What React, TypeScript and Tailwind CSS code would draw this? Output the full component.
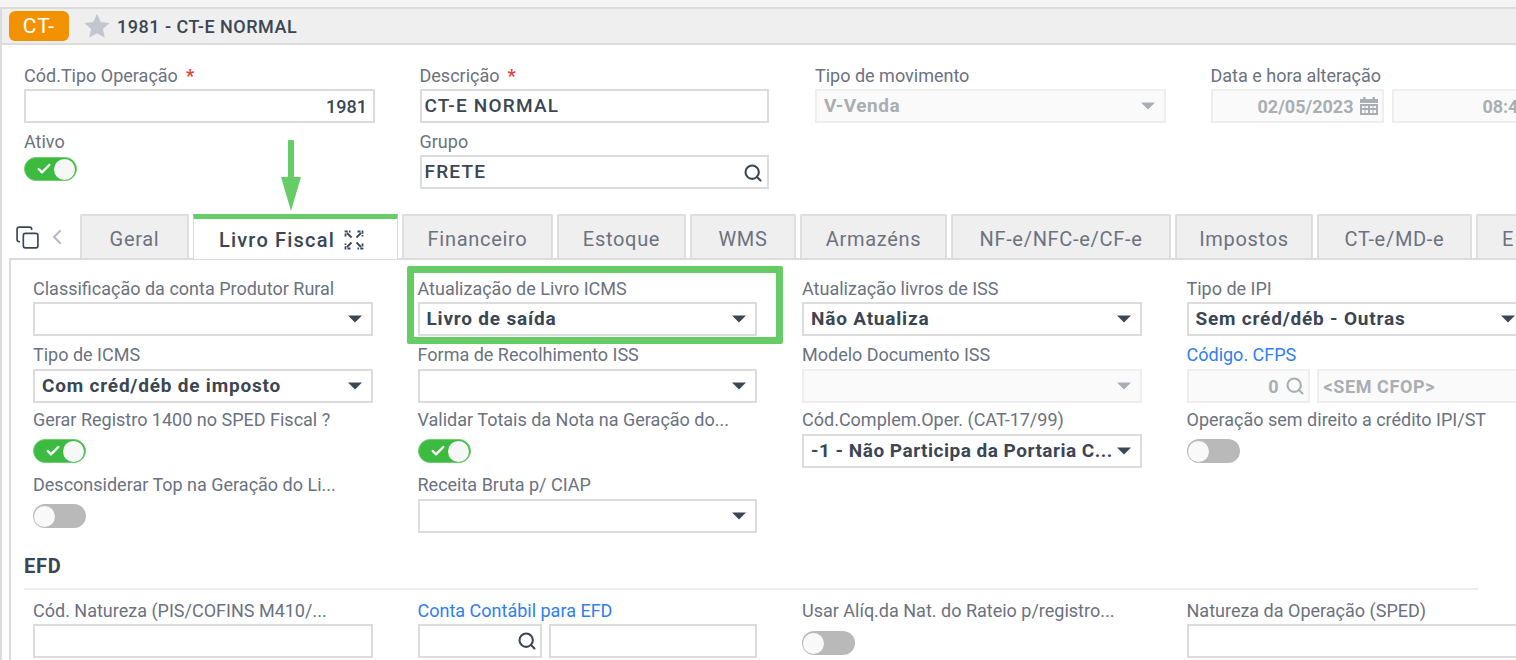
import { Copy, ChevronLeft, Search, Check } from 'lucide-react';

const TABS = [
  { name: 'Geral', w: 'w-[109px]' },
  { name: 'Livro Fiscal', w: 'w-[205px]', active: true },
  { name: 'Financeiro', w: 'w-[151px]' },
  { name: 'Estoque', w: 'w-[129px]' },
  { name: 'WMS', w: 'w-[106px]' },
  { name: 'Armazéns', w: 'w-[147px]' },
  { name: 'NF-e/NFC-e/CF-e', w: 'w-[220px]' },
  { name: 'Impostos', w: 'w-[138px]' },
  { name: 'CT-e/MD-e', w: 'w-[155px]' },
  { name: 'E', w: 'w-[64px]' },
];

function Caret({ muted }: { muted?: boolean }) {
  return (
    <svg className="w-[14px] h-[8px] shrink-0" viewBox="0 0 14 8">
      <path d="M0 0.5h14L7 7.5z" fill={muted ? '#a9aeb4' : '#3a4654'} />
    </svg>
  );
}

function Toggle({ on }: { on?: boolean }) {
  if (on) {
    return (
      <div className="w-[53px] h-[24px] rounded-full bg-[#3dbb41] border border-[#6fce72] flex items-center justify-between pl-[11px] pr-[1px]">
        <Check size={16} strokeWidth={3.5} className="text-white" />
        <div className="w-[21px] h-[21px] rounded-full bg-[#f7f7f7]" />
      </div>
    );
  }
  return (
    <div className="w-[53px] h-[24px] rounded-full bg-[#b9b9b9] flex items-center pl-[1px]">
      <div className="w-[21px] h-[21px] rounded-full bg-[#f9f9f9]" />
    </div>
  );
}

function Label({ text, first, link, req }: { text: string; first?: boolean; link?: boolean; req?: boolean }) {
  return (
    <div
      className={`h-5 leading-[21px] text-[18px] whitespace-nowrap ${first ? 'mb-1' : 'mb-[5px]'} ${
        link ? 'text-[#2f80ed]' : 'text-[#6b7280]'
      }`}
    >
      {text}
      {req && <span className="ml-[8px] text-[#e0443e] font-bold">*</span>}
    </div>
  );
}

function Select({ value, disabled, tight }: { value?: string; disabled?: boolean; tight?: boolean }) {
  return (
    <div
      className={`h-[34px] border-2 flex items-center justify-between pl-[7px] pr-[9px] ${
        disabled ? 'border-[#eeeeee] bg-[#fafafa]' : 'border-[#dcdcdc] bg-white'
      }`}
    >
      <span
        className={`whitespace-nowrap pt-[1px] font-bold text-[19px] ${tight ? 'tracking-[0.5px]' : 'tracking-[0.8px]'} ${
          disabled ? 'text-[#a9aeb4]' : 'text-[#3a4654]'
        }`}
      >
        {value}
      </span>
      <Caret muted={disabled} />
    </div>
  );
}

function Input({ className = '', children }: { className?: string; children?: React.ReactNode }) {
  return (
    <div className={`h-[34px] border-2 border-[#dcdcdc] bg-white flex items-center text-[#3a4654] ${className}`}>
      {children}
    </div>
  );
}

function DisabledInput({ className = '', children }: { className?: string; children?: React.ReactNode }) {
  return (
    <div className={`h-[34px] border-2 border-[#eeeeee] bg-[#fafafa] flex items-center text-[18px] font-bold text-[#a9aeb4] ${className}`}>
      {children}
    </div>
  );
}

function CalendarIcon() {
  return (
    <svg className="w-[20px] h-[20px] shrink-0" viewBox="0 0 20 20" fill="#a9aeb4">
      <rect x="4" y="1" width="2.5" height="4" />
      <rect x="13.5" y="1" width="2.5" height="4" />
      <rect x="1" y="3" width="18" height="4" />
      <path d="M1 8h18v11H1zM3 10v2h2.500v-2zM6.500 10v2h2.500v-2zM11 10v2h2.500v-2zM14.500 10v2H17v-2zM3 14v3h2.500v-3zM6.500 14v3h2.500v-3zM11 14v3h2.500v-3zM14.500 14v3H17v-3z" fillRule="evenodd" />
    </svg>
  );
}

function ExpandIcon() {
  return (
    <svg className="w-[20px] h-[20px] shrink-0" viewBox="0 0 20 20" fill="none" stroke="#3a4654" strokeWidth="1.8">
      <path d="M1.500 6.500V1.500h5M13.500 1.500h5v5M18.500 13.500v5h-5M6.500 18.500h-5v-5" strokeDasharray="3 1.200" />
      <path d="M3 3l4.500 4.500M17 3l-4.500 4.500M17 17l-4.500-4.500M3 17l4.500-4.500" />
    </svg>
  );
}

export default function App() {
  return (
    <div className="relative w-[1516px] h-[660px] overflow-hidden bg-white font-[Roboto,sans-serif]">
      <div className="h-[7px] bg-[#f4f4f4]" />
      <div className="border-l-2 border-[#dcdcdc] h-[653px] ml-0">
        {/* Header */}
        <div className="h-[38px] bg-[#efefef] border-y-2 border-[#dcdcdc] flex items-center pl-[7px]">
          <div className="w-[60px] h-[30px] rounded-md bg-[#f39200] text-white text-[21px] tracking-[1px] pt-[1px] flex items-center justify-center">
            CT-
          </div>
          <svg className="w-[26px] h-[26px] ml-[15px]" viewBox="0 0 24 24" fill="#c3c7cd">
            <path d="M12 0.800l3.400 7.600 8.200 0.900-6.100 5.500 1.700 8.100L12 18.800l-7.200 4.100 1.700-8.100L0.400 9.300l8.200-0.900z" />
          </svg>
          <span className="ml-[7px] text-[18px] font-medium tracking-[0.5px] text-[#3a4654]">1981 - CT-E NORMAL</span>
        </div>

        {/* Form */}
        <div className="pl-[22px] pt-[20px] h-[169px]">
          <div className="grid grid-cols-[repeat(4,351px)] gap-x-[44.5px] grid-rows-[66px_66px]">
            <div>
              <Label first req text="Cód.Tipo Operação" />
              <Input className="justify-end pr-[6px] font-medium text-[18px]">1981</Input>
            </div>
            <div>
              <Label first req text="Descrição" />
              <Input className="pl-[3px] pt-[1px] font-medium text-[19px] tracking-[1.2px] w-[349px]">CT-E NORMAL</Input>
            </div>
            <div>
              <Label first text="Tipo de movimento" />
              <Select disabled value="V-Venda" tight />
            </div>
            <div>
              <Label first text="Data e hora alteração" />
              <div className="flex gap-2 w-[360px]">
                <DisabledInput className="w-[173px] shrink-0 justify-end pr-[3px] gap-[5px]">
                  02/05/2023
                  <CalendarIcon />
                </DisabledInput>
                <DisabledInput className="w-[173px] shrink-0 justify-end pr-[8px]">08:45:12</DisabledInput>
              </div>
            </div>
            <div>
              <Label first text="Ativo" />
              <div className="mt-[6px]"><Toggle on /></div>
            </div>
            <div>
              <Label first text="Grupo" />
              <Input className="pl-[3px] pr-[4px] pt-[1px] justify-between font-medium text-[19px] tracking-[1.2px] w-[349px]">
                FRETE
                <Search size={20} strokeWidth={2.5} />
              </Input>
            </div>
          </div>
        </div>

        {/* Tabs */}
        <div className="flex items-end h-[44px] pl-[13px]">
          <Copy size={25} strokeWidth={1.6} className="text-[#3a4654] mb-[8px] shrink-0" />
          <ChevronLeft size={24} strokeWidth={2.2} className="text-[#b9bdc3] ml-[5px] mb-[9px] shrink-0" />
          <div className="flex gap-[4px] ml-[11px]">
            {TABS.map((tab) =>
              tab.active ? (
                <div
                  key={tab.name}
                  className={`${tab.w} shrink-0 h-[45px] -mb-[1px] relative z-10 bg-white border-t-[5px] border-[#66cc66] border-x border-x-[#dcdcdc] flex items-center justify-center gap-[9px] pr-[8px] pt-[1px] text-[20px] font-medium text-[#3a4654] tracking-[1.2px] whitespace-nowrap`}
                >
                  {tab.name}
                  <ExpandIcon />
                </div>
              ) : (
                <div
                  key={tab.name}
                  className={`${tab.w} shrink-0 h-[44px] bg-[#f0efef] border-2 border-b-0 border-[#dedede] rounded-t-[2px] flex items-center justify-center pt-[3px] text-[20px] tracking-[0.7px] text-[#6b7280] whitespace-nowrap`}
                >
                  {tab.name}
                </div>
              )
            )}
          </div>
        </div>

        {/* Panel */}
        <div className="ml-[7px] border-l-2 border-t-2 border-[#dcdcdc] pl-[22px] pt-[18px] h-[402px]">
          <div className="grid grid-cols-[repeat(4,339.5px)] gap-x-[45px] grid-rows-[66px_65px_65px_65px]">
            <div>
              <Label first text="Classificação da conta Produtor Rural" />
              <Select />
            </div>
            <div>
              <Label first text="Atualização de Livro ICMS" />
              <Select value="Livro de saída" />
            </div>
            <div>
              <Label first text="Atualização livros de ISS" />
              <Select value="Não Atualiza" />
            </div>
            <div>
              <Label first text="Tipo de IPI" />
              <Select value="Sem créd/déb - Outras" />
            </div>

            <div>
              <Label text="Tipo de ICMS" />
              <Select value="Com créd/déb de imposto" />
            </div>
            <div>
              <Label text="Forma de Recolhimento ISS" />
              <Select />
            </div>
            <div>
              <Label text="Modelo Documento ISS" />
              <Select disabled />
            </div>
            <div>
              <Label link text="Código. CFPS" />
              <div className="flex gap-[7px]">
                <DisabledInput className="w-[123px] shrink-0 justify-end pr-[3px] gap-[6px]">
                  0
                  <Search size={20} strokeWidth={2.5} className="text-[#a9aeb4]" />
                </DisabledInput>
                <DisabledInput className="w-[209px] shrink-0 pl-[5px] tracking-[0.6px]">&lt;SEM CFOP&gt;</DisabledInput>
              </div>
            </div>

            <div>
              <Label text="Gerar Registro 1400 no SPED Fiscal ?" />
              <div className="mt-[10px]"><Toggle on /></div>
            </div>
            <div>
              <Label text="Validar Totais da Nota na Geração do..." />
              <div className="mt-[10px]"><Toggle on /></div>
            </div>
            <div>
              <Label text="Cód.Complem.Oper. (CAT-17/99)" />
              <Select value="-1 - Não Participa da Portaria C..." tight />
            </div>
            <div>
              <Label text="Operação sem direito a crédito IPI/ST" />
              <div className="mt-[10px]"><Toggle /></div>
            </div>

            <div>
              <Label text="Desconsiderar Top na Geração do Li..." />
              <div className="mt-[10px]"><Toggle /></div>
            </div>
            <div>
              <Label text="Receita Bruta p/ CIAP" />
              <Select />
            </div>
          </div>

          {/* EFD */}
          <div className="-ml-[9px] mt-[15px] w-[1454px] h-[36px] border-b-2 border-[#eeeeee] text-[20px] font-bold tracking-[0.8px] text-[#3a4654] leading-[24px]">
            EFD
          </div>
          <div className="grid grid-cols-[repeat(4,339.5px)] gap-x-[45px] mt-[10px]">
            <div>
              <Label first text="Cód. Natureza (PIS/COFINS M410/..." />
              <Input />
            </div>
            <div>
              <Label first link text="Conta Contábil para EFD" />
              <div className="flex gap-[7px]">
                <Input className="w-[124px] justify-end pr-[3px]">
                  <Search size={20} strokeWidth={2.5} />
                </Input>
                <Input className="w-[208px]" />
              </div>
            </div>
            <div>
              <Label first text="Usar Alíq.da Nat. do Rateio p/registro..." />
              <div className="mt-[11px]"><Toggle /></div>
            </div>
            <div>
              <Label first text="Natureza da Operação (SPED)" />
              <Input />
            </div>
          </div>
        </div>
      </div>

      {/* Annotations drawn over the screenshot */}
      <div className="absolute left-[407px] top-[266px] w-[376px] h-[78px] border-[7px] border-[#66cc66] rounded-[2px]" />
      <svg className="absolute left-[280px] top-[140px] w-[22px] h-[72px]" viewBox="0 0 22 72">
        <path d="M11 1.500V40" stroke="#66cc66" strokeWidth="6" strokeLinecap="round" />
        <path d="M1 37h20L11 71z" fill="#66cc66" />
      </svg>
    </div>
  );
}
